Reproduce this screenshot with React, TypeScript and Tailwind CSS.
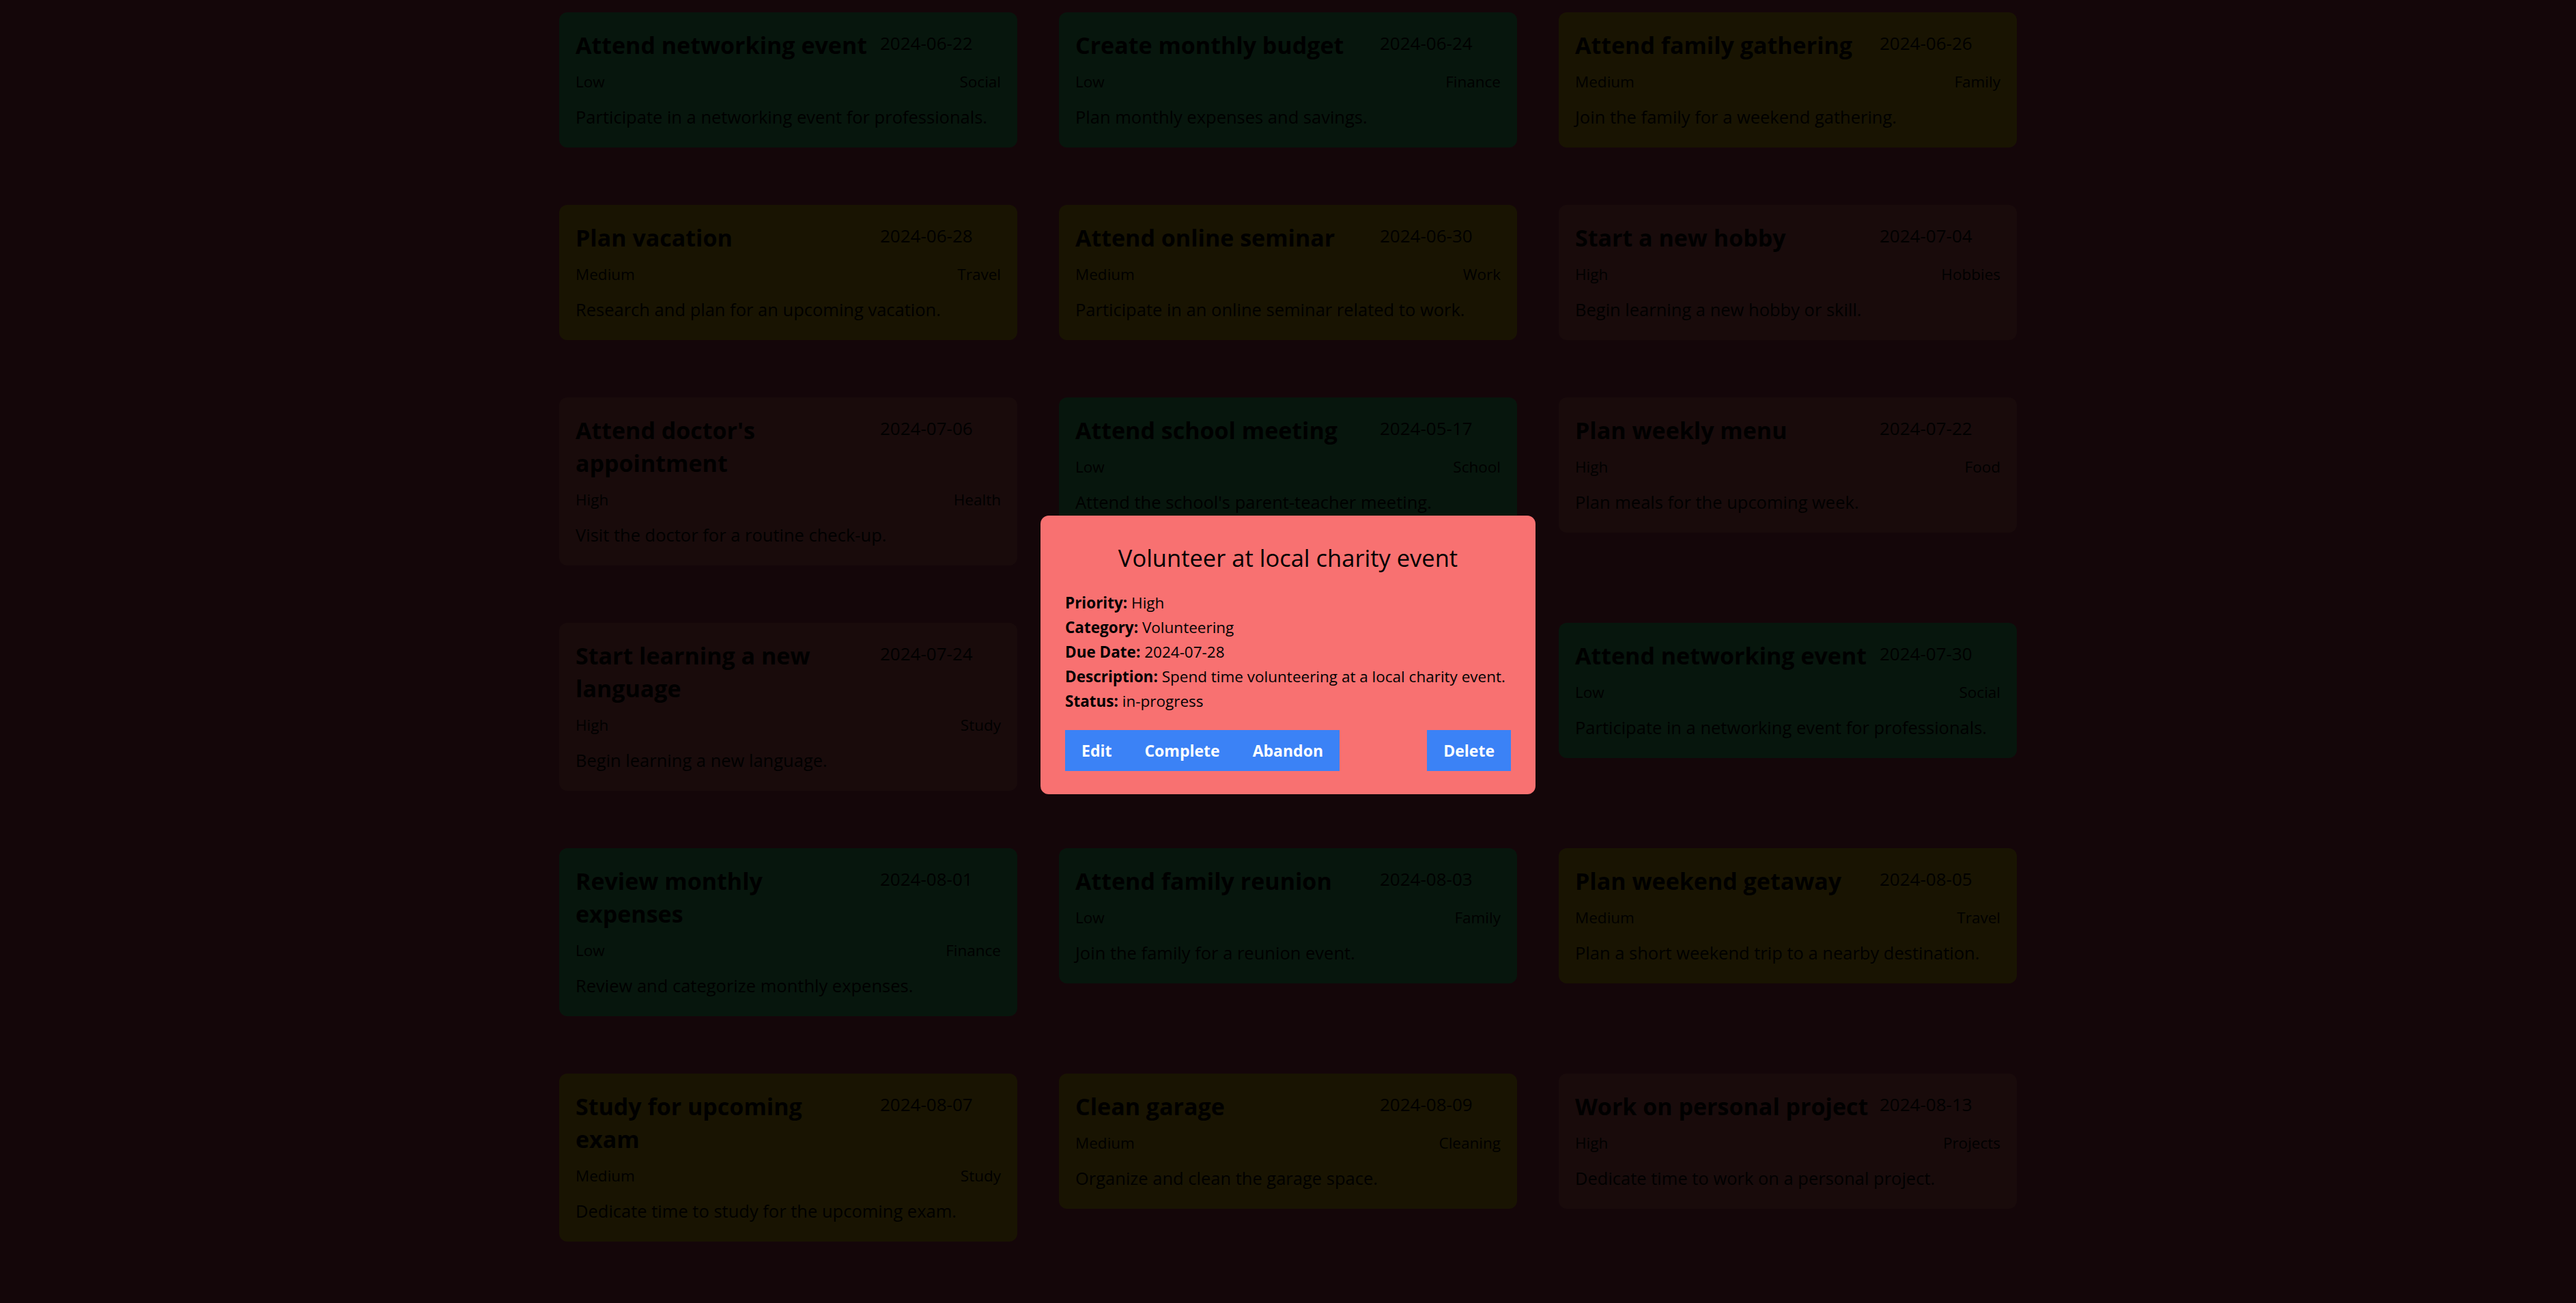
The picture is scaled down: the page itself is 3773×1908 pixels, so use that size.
import React from "react";

type Priority = "Low" | "Medium" | "High";

type Task = {
  title: string;
  date: string;
  priority: Priority;
  category: string;
  description: string;
};

// titles keep their line breaks (pre-line) so the cards wrap where the design does
const tasks: Task[] = [
  { title: "Attend networking event", date: "2024-06-22", priority: "Low", category: "Social", description: "Participate in a networking event for professionals." },
  { title: "Create monthly budget", date: "2024-06-24", priority: "Low", category: "Finance", description: "Plan monthly expenses and savings." },
  { title: "Attend family gathering", date: "2024-06-26", priority: "Medium", category: "Family", description: "Join the family for a weekend gathering." },
  { title: "Plan vacation", date: "2024-06-28", priority: "Medium", category: "Travel", description: "Research and plan for an upcoming vacation." },
  { title: "Attend online seminar", date: "2024-06-30", priority: "Medium", category: "Work", description: "Participate in an online seminar related to work." },
  { title: "Start a new hobby", date: "2024-07-04", priority: "High", category: "Hobbies", description: "Begin learning a new hobby or skill." },
  { title: "Attend doctor's\nappointment", date: "2024-07-06", priority: "High", category: "Health", description: "Visit the doctor for a routine check-up." },
  { title: "Attend school meeting", date: "2024-05-17", priority: "Low", category: "School", description: "Attend the school's parent-teacher meeting." },
  { title: "Plan weekly menu", date: "2024-07-22", priority: "High", category: "Food", description: "Plan meals for the upcoming week." },
  { title: "Start learning a new\nlanguage", date: "2024-07-24", priority: "High", category: "Study", description: "Begin learning a new language." },
  { title: "Volunteer at local charity event", date: "2024-07-28", priority: "High", category: "Volunteering", description: "Spend time volunteering at a local charity event." },
  { title: "Attend networking event", date: "2024-07-30", priority: "Low", category: "Social", description: "Participate in a networking event for professionals." },
  { title: "Review monthly\nexpenses", date: "2024-08-01", priority: "Low", category: "Finance", description: "Review and categorize monthly expenses." },
  { title: "Attend family reunion", date: "2024-08-03", priority: "Low", category: "Family", description: "Join the family for a reunion event." },
  { title: "Plan weekend getaway", date: "2024-08-05", priority: "Medium", category: "Travel", description: "Plan a short weekend trip to a nearby destination." },
  { title: "Study for upcoming\nexam", date: "2024-08-07", priority: "Medium", category: "Study", description: "Dedicate time to study for the upcoming exam." },
  { title: "Clean garage", date: "2024-08-09", priority: "Medium", category: "Cleaning", description: "Organize and clean the garage space." },
  { title: "Work on personal project", date: "2024-08-13", priority: "High", category: "Projects", description: "Dedicate time to work on a personal project." },
];

const priorityColor: Record<Priority, string> = {
  Low: "bg-[#4ade80]",
  Medium: "bg-[#facc15]",
  High: "bg-[#f87171]",
};

function TaskCard({ task }: { task: Task }) {
  return (
    <div className={`rounded-[12px] p-[24px] text-black ${priorityColor[task.priority]}`}>
      <div className="flex items-start">
        <h3 className="w-[446px] shrink-0 whitespace-pre-line text-[34px] font-bold leading-[48px]">{task.title}</h3>
        <span className="text-[26px] leading-[42px]">{task.date}</span>
      </div>
      <div className="mt-[12px] flex justify-between text-[22.5px] leading-[36px]">
        <span>{task.priority}</span>
        <span>{task.category}</span>
      </div>
      <p className="mt-[12px] text-[25.5px] leading-[42px]">{task.description}</p>
    </div>
  );
}

function TaskModal({ task }: { task: Task }) {
  const btn = "bg-[#3b82f6] px-[24px] py-[12px] text-[23px] font-bold leading-[36px] text-white";

  return (
    <div className="fixed inset-0 flex items-center justify-center bg-black/90 pt-[10px]">
      <div className="w-[725px] rounded-[12px] bg-[#f87171] px-[36px] pt-[38px] pb-[34px] text-black">
        <h2 className="mb-[24px] text-center text-[34.5px] leading-[48px]">{task.title}</h2>
        <div className="text-[22.5px] leading-[36px]">
          <p><span className="font-bold">Priority:</span> {task.priority}</p>
          <p><span className="font-bold">Category:</span> {task.category}</p>
          <p><span className="font-bold">Due Date:</span> {task.date}</p>
          <p><span className="font-bold">Description:</span> {task.description}</p>
          <p><span className="font-bold">Status:</span> in-progress</p>
        </div>
        <div className="mt-[24px] flex justify-between">
          <div className="flex">
            <button className={btn}>Edit</button>
            <button className={btn}>Complete</button>
            <button className={btn}>Abandon</button>
          </div>
          <button className={btn}>Delete</button>
        </div>
      </div>
    </div>
  );
}

export default function App() {
  const selected = tasks[10];

  return (
    <div className="min-h-screen bg-[#c83c5a] pt-[18px] pb-[90px] font-['Open_Sans',sans-serif]">
      <div className="mx-auto grid w-[2135px] grid-cols-3 items-start gap-x-[61px] gap-y-[84px]">
        {tasks.map((task, i) => (
          <TaskCard key={i} task={task} />
        ))}
      </div>
      <TaskModal task={selected} />
    </div>
  );
}
